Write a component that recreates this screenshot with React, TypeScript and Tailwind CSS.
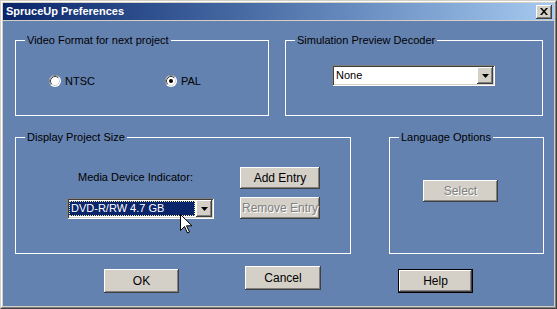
import React from 'react';

const raised =
  'bg-[#d4d0c8] shadow-[inset_-1px_-1px_#404040,inset_1px_1px_#ffffff,inset_-2px_-2px_#808080,inset_2px_2px_#d4d0c8]';
const sunken =
  'bg-white shadow-[inset_1px_1px_#808080,inset_-1px_-1px_#ffffff,inset_2px_2px_#404040,inset_-2px_-2px_#d4d0c8]';
const disabledText = 'text-[#808080] [text-shadow:1px_1px_0_#ffffff]';

const Radio: React.FC<{ checked?: boolean }> = ({ checked }) => (
  <svg width="12" height="12" viewBox="0 0 12 12" className="shrink-0">
    <circle cx="6" cy="6" r="6" fill="#ffffff" />
    <path d="M2.11 9.89 A5.5 5.5 0 0 1 9.89 2.11" fill="none" stroke="#808080" />
    <path d="M2.82 9.18 A4.5 4.5 0 0 1 9.18 2.82" fill="none" stroke="#404040" />
    <path d="M9.18 2.82 A4.5 4.5 0 0 1 2.82 9.18" fill="none" stroke="#d4d0c8" />
    {checked && <circle cx="6" cy="6" r="2" fill="#000000" />}
  </svg>
);

const ArrowButton: React.FC = () => (
  <div className={`${raised} w-[16px] h-[17px] flex items-center justify-center`}>
    <svg width="7" height="4" viewBox="0 0 7 4">
      <path d="M0 0h7L3.5 4z" fill="#000000" />
    </svg>
  </div>
);

const Button: React.FC<{ label: string; disabled?: boolean; className?: string }> = ({
  label,
  disabled,
  className = '',
}) => (
  <div
    className={`${raised} flex items-center justify-center text-[12px] ${
      disabled ? disabledText : 'text-black'
    } ${className}`}
  >
    {label}
  </div>
);

const Group: React.FC<{ title: string; className: string; children: React.ReactNode }> = ({
  title,
  className,
  children,
}) => (
  <fieldset className={`border border-white ${className}`}>
    <legend className="ml-[9px] px-[2px] leading-[13px] text-[11px] text-black">{title}</legend>
    {children}
  </fieldset>
);

export default function App() {
  return (
    <div
      className="relative w-[557px] h-[309px] border border-t-[#d4d0c8] border-l-[#d4d0c8] border-r-[#404040] border-b-[#404040] font-['Liberation_Sans',Arial,sans-serif] select-none"
    >
      <div className="h-full border border-t-white border-l-white border-r-[#808080] border-b-[#808080] bg-[#d4d0c8] p-[1px] flex flex-col">
        {/* Title bar */}
        <div className="h-[17px] shrink-0 flex items-center justify-between bg-gradient-to-r from-[#0a246a] to-[#a6caf0] pl-[3px] pr-[2px]">
          <span className="text-white font-bold text-[11px] leading-none">SpruceUp Preferences</span>
          <div className={`${raised} w-[16px] h-[14px] flex items-center justify-center`}>
            <svg width="8" height="7" viewBox="0 0 8 7">
              <path d="M0 0h2l2 2.5L6 0h2L5 3.5 8 7H6L4 4.5 2 7H0l3-3.5z" fill="#000000" />
            </svg>
          </div>
        </div>

        {/* Body */}
        <div className="mt-[1px] flex-1 bg-[#6482b0] pl-[12px] pt-[13px] flex flex-col">
          <div className="flex gap-[16px]">
            <Group title="Video Format for next project" className="w-[254px] h-[82px]">
              <div className="flex items-center pl-[33px] pt-[26px] text-[11px] text-black">
                <div className="flex items-center w-[116px]">
                  <Radio />
                  <span className="ml-[4px]">NTSC</span>
                </div>
                <div className="flex items-center">
                  <Radio checked />
                  <span className="ml-[4px]">PAL</span>
                </div>
              </div>
            </Group>
            <Group title="Simulation Preview Decoder" className="w-[258px] h-[82px]">
              <div className="pl-[46px] pt-[18px]">
                <div className={`${sunken} w-[163px] h-[21px] flex items-center justify-between pl-[4px] pr-[2px]`}>
                  <span className="text-[11px] text-black">None</span>
                  <ArrowButton />
                </div>
              </div>
            </Group>
          </div>

          <div className="flex gap-[38px] mt-[15px]">
            <Group title="Display Project Size" className="w-[336px] h-[123px]">
              <div className="flex pl-[51px] pt-[23px]">
                <div className="flex flex-col pt-[4px]">
                  <span className="pl-[11px] text-[11px] leading-[13px] text-black">Media Device Indicator:</span>
                  <div className={`${sunken} mt-[14px] w-[147px] h-[21px] flex items-center justify-between pl-[2px] pr-[2px]`}>
                    <span className="h-[15px] w-[126px] bg-[#0a246a] border border-dotted border-[#f0e8a0] flex items-center pl-[1px] text-[11px] text-white">
                      DVD-R/RW 4.7 GB
                    </span>
                    <ArrowButton />
                  </div>
                </div>
                <div className="ml-[26px] flex flex-col gap-[8px]">
                  <Button label="Add Entry" className="w-[80px] h-[22px]" />
                  <Button label="Remove Entry" disabled className="w-[80px] h-[22px]" />
                </div>
              </div>
            </Group>
            <Group title="Language Options" className="w-[155px] h-[123px]">
              <div className="pl-[33px] pt-[36px]">
                <Button label="Select" disabled className="w-[75px] h-[22px]" />
              </div>
            </Group>
          </div>

          <div className="flex items-start pt-[12px] pl-[89px]">
            <Button label="OK" className="mt-[3px] w-[75px] h-[24px]" />
            <Button label="Cancel" className="ml-[66px] w-[76px] h-[24px]" />
            <div className="ml-[77px] mt-[3px] border border-black">
              <Button label="Help" className="w-[73px] h-[22px]" />
            </div>
          </div>
        </div>
      </div>

      {/* Mouse pointer */}
      <svg width="12" height="20" viewBox="0 0 12 20" className="absolute left-[179px] top-[213px]">
        <path d="M0.5 0.5v16l4-4 3 6.5 2-1-3-6.2h5.5z" fill="#ffffff" stroke="#000000" strokeLinejoin="miter" />
      </svg>
    </div>
  );
}
